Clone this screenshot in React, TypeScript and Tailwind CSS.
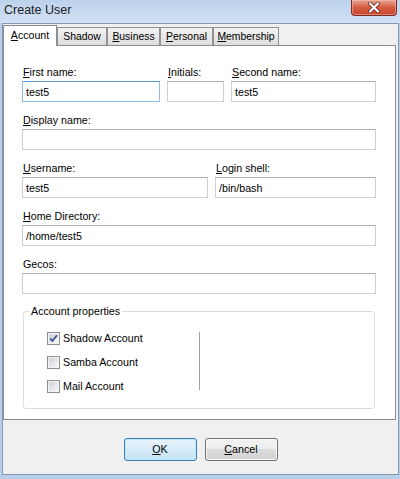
import type { ReactNode } from 'react'

// text with the access-key letter underlined (at = -1 means none)
function Acc({ text, at = 0 }: { text: string; at?: number }) {
  if (at < 0) return <>{text}</>
  return (
    <>
      {text.slice(0, at)}
      <span className="underline decoration-1 underline-offset-[1px]">{text[at]}</span>
      {text.slice(at + 1)}
    </>
  )
}

function Field({
  label,
  at = 0,
  value = '',
  w,
  focused = false,
}: {
  label: string
  at?: number
  value?: string
  w: string
  focused?: boolean
}) {
  return (
    <div className={`flex flex-col ${w}`}>
      <label className="h-[13px] pl-px leading-[13px] mb-[2px] whitespace-nowrap">
        <Acc text={label} at={at} />
      </label>
      <input
        readOnly
        value={value}
        className={`h-[21px] w-full bg-white pl-[3px] text-[10.7px] text-black outline-none border ${
          focused
            ? 'border-[#8ebde8] border-t-[#5b9ad6]'
            : 'border-[#ccced3] border-t-[#abadb3]'
        }`}
      />
    </div>
  )
}

function Check({ label, checked = false }: { label: string; checked?: boolean }) {
  return (
    <div className="h-[24px] flex items-center">
      <span className="w-[13px] h-[13px] border border-[#8e8f8f] flex">
        <svg width="11" height="11" viewBox="0 0 11 11">
          <defs>
            <linearGradient id="cbfill" x1="0" y1="0" x2="1" y2="1">
              <stop offset="0" stopColor="#cfd2d8" />
              <stop offset="1" stopColor="#f7f7f7" />
            </linearGradient>
          </defs>
          <rect x="0" y="0" width="11" height="11" fill="#f4f4f4" />
          <rect x="1" y="1" width="9" height="9" fill="url(#cbfill)" />
          {checked && (
            <path d="M2.3 5.4 L4.4 8 L8.9 2.2" fill="none" stroke="#3a5196" strokeWidth="1.8" strokeLinejoin="round" />
          )}
        </svg>
      </span>
      <span className="ml-[3px] leading-[13px]">{label}</span>
    </div>
  )
}

function Tab({ children, w, active = false }: { children: ReactNode; w: string; active?: boolean }) {
  if (active) {
    return (
      <div className={`${w} h-[21px] bg-white border border-b-0 border-[#898c95] flex items-center justify-center text-[10.6px]`}>
        {children}
      </div>
    )
  }
  return (
    <div
      className={`${w} h-[18px] mt-[2px] border border-b-0 border-[#8f9197] bg-linear-to-b from-[#f3f3f3] to-[#dedede] flex items-center justify-center pt-px text-[10.4px]`}
    >
      {children}
    </div>
  )
}

export default function App() {
  return (
    <div className="w-[400px] h-[479px] bg-[#b8cfea] flex flex-col font-['Liberation_Sans',Arial,sans-serif] text-[10.7px] text-black overflow-hidden">
      {/* title bar */}
      <div className="h-[23px] shrink-0 flex items-start justify-between bg-linear-to-b from-[#bcd2ec] to-[#d2e1f3]">
        <span className="pl-[4px] pt-[2px] text-[12.5px] leading-[16px] text-[#222]">Create User</span>
        <div className="mr-[3px] w-[46px] h-[16px] rounded-b-[4px] border border-t-0 border-[#7b2d24] bg-linear-to-b from-[#e9a395] via-[#d55c43] to-[#c8452d] shadow-[inset_0_0_0_1px_rgba(255,200,190,0.45)] flex items-center justify-center">
          <svg width="14" height="11" viewBox="0 0 14 11">
            <path d="M3 1.5 L11 9.5 M11 1.5 L3 9.5" stroke="#5a1e17" strokeWidth="3.6" strokeLinecap="round" />
            <path d="M3 1.5 L11 9.5 M11 1.5 L3 9.5" stroke="#ffffff" strokeWidth="2.2" strokeLinecap="round" />
          </svg>
        </div>
      </div>

      {/* client area */}
      <div className="flex-1 ml-[2px] mr-px mb-[4px] border border-[#8497b2] bg-[#f0f0f0] flex flex-col pt-px">
        <div className="relative z-10 -mb-px h-[21px] flex">
          <Tab w="w-[54px]" active>
            <Acc text="Account" />
          </Tab>
          <Tab w="w-[50px]">
            <Acc text="Shadow" at={-1} />
          </Tab>
          <Tab w="w-[53px]">
            <Acc text="Business" />
          </Tab>
          <Tab w="w-[53px]">
            <Acc text="Personal" />
          </Tab>
          <Tab w="w-[66px]">
            <Acc text="Membership" />
          </Tab>
        </div>

        <div className="mr-[2px] h-[375px] border border-[#898c95] bg-white pt-[20px] pl-[18px] pr-[19px]">
          <div className="flex flex-col gap-[12px]">
            <div className="flex gap-[7px]">
              <Field label="First name:" w="w-[138px]" value="test5" focused />
              <Field label="Initials:" w="w-[57px]" />
              <Field label="Second name:" w="w-[145px]" value="test5" />
            </div>
            <Field label="Display name:" w="w-full" />
            <div className="flex gap-[7px]">
              <Field label="Username:" w="w-[186px]" value="test5" />
              <Field label="Login shell:" w="w-[161px]" value="/bin/bash" />
            </div>
            <Field label="Home Directory:" w="w-full" value="/home/test5" />
            <Field label="Gecos:" at={-1} w="w-full" />
          </div>

          <fieldset className="mt-[11px] mx-px border border-[#d5dfe5] rounded-[3px] pt-[8px] pb-[10px]">
            <legend className="ml-[5px] px-[2px] leading-[13px]">Account properties</legend>
            <div className="flex">
              <div className="w-[175px] pl-[23px] flex flex-col">
                <Check label="Shadow Account" checked />
                <Check label="Samba Account" />
                <Check label="Mail Account" />
              </div>
              <div className="mt-[6px] h-[58px] w-px bg-[#a0a0a0]" />
              <div className="mt-[6px] h-[58px] w-px bg-white" />
            </div>
          </fieldset>
        </div>

        <div className="flex justify-center gap-[8px] pt-[18px]">
          <button className="w-[73px] h-[23px] rounded-[3px] border border-[#3c7fb1] bg-linear-to-b from-[#e9f5fc] to-[#c4e3f5] shadow-[inset_0_0_0_1px_#bfe6fb] leading-[13px]">
            <Acc text="OK" />
          </button>
          <button className="w-[73px] h-[23px] rounded-[3px] border border-[#707070] bg-[linear-gradient(#f4f4f4,#ebebeb_50%,#dddddd_50%,#d1d1d1)] shadow-[inset_0_0_0_1px_#fbfbfb] leading-[13px]">
            <Acc text="Cancel" />
          </button>
        </div>
      </div>
    </div>
  )
}
